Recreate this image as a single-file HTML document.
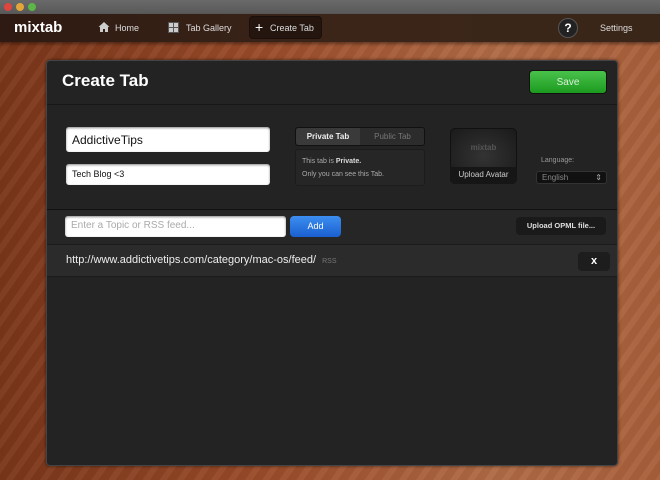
<!DOCTYPE html>
<html><head><style>
*{margin:0;padding:0;box-sizing:border-box}
body{width:660px;height:480px;overflow:hidden;font-family:"Liberation Sans",sans-serif;position:relative;
background:repeating-linear-gradient(125deg,rgba(255,255,255,0.04) 0 6px,rgba(0,0,0,0.04) 6px 14px),linear-gradient(90deg,#7a3519 0%,#9a4c2a 40%,#b06a45 75%,#a95f3a 100%)}
.tb{position:absolute;left:0;top:0;width:660px;height:14px;background:linear-gradient(#6a6a6a,#585858)}
.dot{position:absolute;top:3px;width:8px;height:8px;border-radius:50%}
.nav{position:absolute;left:0;top:14px;width:660px;height:28px;background:linear-gradient(90deg,#2e1a12,#3b2519 50%,#3a2619);box-shadow:0 2px 3px rgba(0,0,0,.4);color:#ddd;font-size:9px}
.nav span{position:absolute;top:9px}
.panel{position:absolute;left:46px;top:60px;width:572px;height:406px;background:#232323;border-radius:4px;box-shadow:0 0 3px rgba(0,0,0,.6);border:1px solid #444;overflow:hidden}
.in{position:absolute;background:#fff;border-radius:3px;color:#111;box-shadow:inset 0 1px 2px #888}
.btn{position:absolute;border-radius:4px;text-align:center;color:#ddd;font-size:8px;font-weight:bold}
</style></head><body>
<div class="tb"><div class="dot" style="left:4px;background:#e0443e"></div><div class="dot" style="left:16px;background:#e2a53a"></div><div class="dot" style="left:28px;background:#5cb846"></div></div>
<div class="nav">
<span style="left:14px;top:5px;font-size:15px;font-weight:bold;color:#fff">mixtab</span>
<svg style="position:absolute;left:98px;top:7px" width="12" height="12" viewBox="0 0 12 12"><path d="M6 1L0.5 6H2V11H5V8H7V11H10V6H11.5Z" fill="#ccc"/></svg><span style="left:115px">Home</span>
<svg style="position:absolute;left:168px;top:8px" width="11" height="11" viewBox="0 0 11 11"><rect width="11" height="11" fill="#555"/><rect x="1" y="1" width="4" height="4" fill="#ccc"/><rect x="6" y="1" width="4" height="4" fill="#ccc"/><rect x="1" y="6" width="4" height="4" fill="#ccc"/><rect x="6" y="6" width="4" height="4" fill="#ccc"/></svg><span style="left:186px">Tab Gallery</span>
<div style="position:absolute;left:249px;top:2px;width:73px;height:23px;background:#24150f;border-radius:4px;border:1px solid #1a0f0a"></div>
<span style="left:255px;top:5px;font-size:14px;color:#fff">+</span><span style="left:270px">Create Tab</span>
<div style="position:absolute;left:558px;top:4px;width:20px;height:20px;border-radius:50%;background:#222;border:1px solid #555;color:#fff;font-weight:bold;font-size:12px;text-align:center;line-height:18px">?</div>
<span style="left:600px">Settings</span>
</div>
<div class="panel">
<div style="position:absolute;left:0;top:0;width:572px;height:44px;border-bottom:1px solid #181818"></div>
<div style="position:absolute;left:15px;top:10px;font-size:17px;font-weight:bold;color:#fff">Create Tab</div>
<div class="btn" style="left:482px;top:9px;width:78px;height:24px;background:linear-gradient(#49c24b,#1c9a1f);color:#d8f0d8;font-size:10px;font-weight:normal;line-height:24px;border:1px solid #111">Save</div>
<div class="in" style="left:19px;top:66px;width:204px;height:25px;font-size:12px;padding:6px 6px">AddictiveTips</div>
<div class="in" style="left:19px;top:103px;width:204px;height:21px;font-size:9px;padding:5px 6px">Tech Blog &lt;3</div>
<div style="position:absolute;left:248px;top:66px;width:130px;height:19px;border-radius:3px;background:#2c2c2c;border:1px solid #111"></div>
<div style="position:absolute;left:249px;top:67px;width:64px;height:17px;background:#3a3a3a;border-radius:3px 0 0 3px;color:#eee;font-size:8px;font-weight:bold;text-align:center;line-height:17px">Private Tab</div>
<div style="position:absolute;left:314px;top:67px;width:63px;height:17px;color:#777;font-size:8px;text-align:center;line-height:17px">Public Tab</div>
<div style="position:absolute;left:248px;top:88px;width:130px;height:37px;border-radius:3px;background:#262626;border:1px solid #1c1c1c;color:#aaa;font-size:7px;padding:5px 6px;line-height:13px">This tab is <b style="color:#ddd">Private.</b><br>Only you can see this Tab.</div>
<div style="position:absolute;left:403px;top:67px;width:67px;height:56px;border-radius:5px;background:radial-gradient(#333,#1a1a1a);border:1px solid #111"></div>
<div style="position:absolute;left:403px;top:82px;width:67px;text-align:center;color:#555;font-size:8px;font-weight:bold">mixtab</div>
<div style="position:absolute;left:403px;top:106px;width:67px;height:17px;background:#161616;border-radius:0 0 5px 5px;color:#ccc;font-size:8px;text-align:center;line-height:15px">Upload Avatar</div>
<div style="position:absolute;left:494px;top:96px;color:#999;font-size:7px">Language:</div>
<div style="position:absolute;left:489px;top:110px;width:71px;height:13px;background:#111;border:1px solid #333;border-radius:3px;color:#888;font-size:8px;padding-left:5px;line-height:11px">English<span style="float:right;margin-right:4px;color:#aaa">&#8661;</span></div>
<div style="position:absolute;left:0;top:148px;width:572px;height:1px;background:#111"></div>
<div style="position:absolute;left:0;top:149px;width:572px;height:34px;background:#262626"></div>
<div class="in" style="left:18px;top:155px;width:221px;height:21px;color:#aaa;font-size:10px;padding:4px 6px">Enter a Topic or RSS feed...</div>
<div class="btn" style="left:243px;top:155px;width:51px;height:21px;background:linear-gradient(#3c8ef0,#1a5fd0);color:#fff;font-weight:normal;font-size:9px;line-height:21px">Add</div>
<div class="btn" style="left:469px;top:156px;width:90px;height:18px;background:#1a1a1a;line-height:18px;font-size:7.5px">Upload OPML file...</div>
<div style="position:absolute;left:0;top:183px;width:572px;height:33px;background:#2b2b2b;border-top:1px solid #1c1c1c;border-bottom:1px solid #1a1a1a"></div>
<div style="position:absolute;left:19px;top:193px;color:#eee;font-size:11px">http://www.addictivetips.com/category/mac-os/feed/ <span style="color:#777;font-size:7px;margin-left:3px">RSS</span></div>
<div class="btn" style="left:531px;top:191px;width:32px;height:19px;background:#1d1d1d;color:#fff;font-size:11px;line-height:19px">x</div>
</div>
</body></html>
